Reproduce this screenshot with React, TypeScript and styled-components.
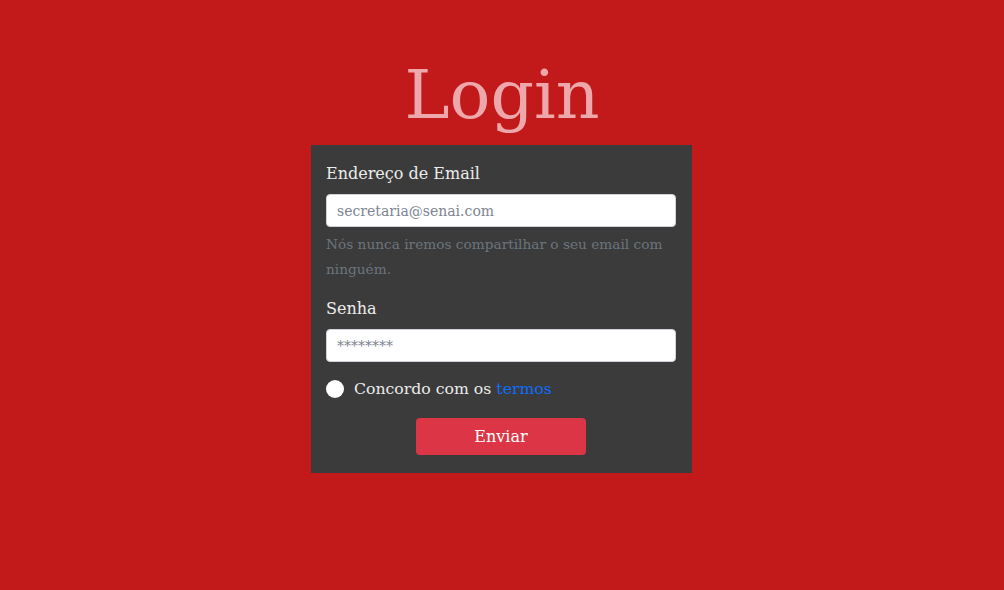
import React from "react";
import styled, { createGlobalStyle } from "styled-components";

const Global = createGlobalStyle`
  html, body { margin: 0; padding: 0; background: #c21a1a; }
  body { font-family: "DejaVu Serif", "Liberation Serif", serif; }
  * { box-sizing: border-box; }
`;

const Page = styled.main`
  min-height: 590px;
  display: flex;
  flex-direction: column;
  align-items: center;
  padding-top: 44px;
`;

const Title = styled.h1`
  margin: 0;
  font-family: "DejaVu Serif", serif;
  font-weight: 400;
  font-size: 68px;
  line-height: 101px;
  color: #eea7ab;
`;

const Card = styled.form`
  width: 381px;
  margin-right: 1px;
  background: #3b3b3b;
  padding: 14px 16px 18px 15px;
  display: flex;
  flex-direction: column;
`;

const Label = styled.label`
  color: #ececec;
  font-size: 16px;
  line-height: 30px;
  margin-bottom: 5px;
`;

const Input = styled.input`
  width: 100%;
  height: 33px;
  border: 1px solid #ced4da;
  border-radius: 4px;
  background: #fff;
  padding: 0 10px;
  font-family: "DejaVu Serif", serif;
  font-size: 14px;
  color: #495057;
  &::placeholder { color: #7d8590; }
`;

const Help = styled.small`
  color: #6c757d;
  font-size: 13.7px;
  line-height: 25px;
  margin-top: 5px;
`;

const Group = styled.div<{ $gap: number }>`
  display: flex;
  flex-direction: column;
  margin-bottom: ${(p) => p.$gap}px;
`;

const CheckRow = styled.div`
  display: flex;
  align-items: center;
  gap: 10px;
  margin-top: 15px;
`;

const Radio = styled.span`
  width: 18px;
  height: 18px;
  border-radius: 50%;
  background: #fff;
`;

const CheckText = styled.span`
  color: #ececec;
  font-size: 15.7px;
  line-height: 24px;
`;

const Link = styled.a`
  color: #0d6efd;
  text-decoration: none;
`;

const Button = styled.button`
  align-self: center;
  margin-top: 17px;
  width: 170px;
  height: 37px;
  background: #dc3545;
  border: none;
  border-radius: 4px;
  color: #fff;
  font-family: "DejaVu Serif", serif;
  font-size: 16px;
`;

export default function App() {
  return (
    <>
      <Global />
      <Page>
        <Title>Login</Title>
        <Card onSubmit={(e) => e.preventDefault()}>
          <Group $gap={12}>
            <Label>Endereço de Email</Label>
            <Input type="email" placeholder="secretaria@senai.com" />
            <Help>Nós nunca iremos compartilhar o seu email com ninguém.</Help>
          </Group>
          <Group $gap={0}>
            <Label>Senha</Label>
            <Input type="password" placeholder="********" />
          </Group>
          <CheckRow>
            <Radio />
            <CheckText>
              Concordo com os <Link href="#">termos</Link>
            </CheckText>
          </CheckRow>
          <Button type="submit">Enviar</Button>
        </Card>
      </Page>
    </>
  );
}
